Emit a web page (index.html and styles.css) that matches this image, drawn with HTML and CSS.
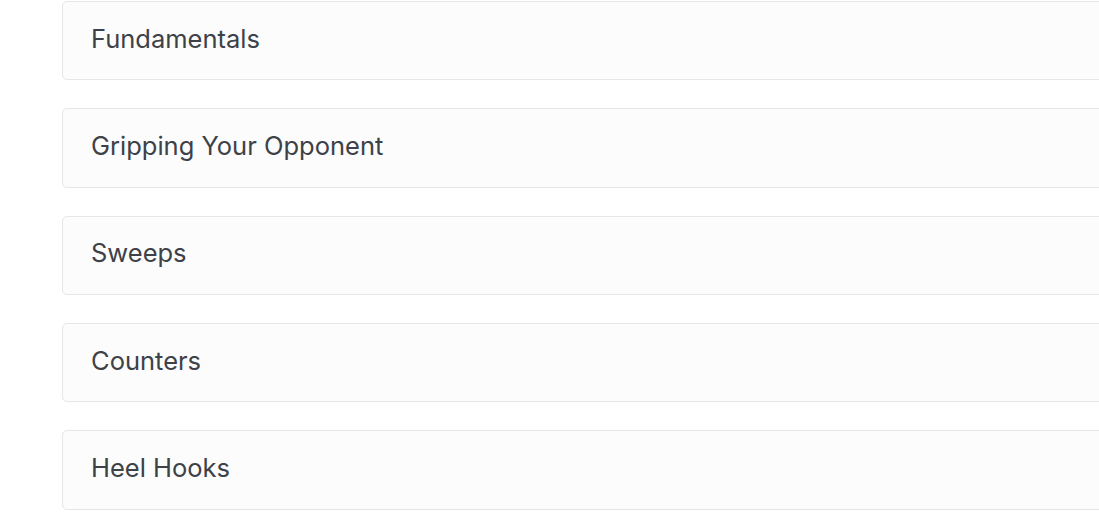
FILE: index.html
```html
<!DOCTYPE html>
<html lang="en">
<head>
<meta charset="utf-8">
<title>Modules</title>
<link rel="stylesheet" href="styles.css">
</head>
<body>
<main class="list">
  <div class="card"><span class="title">Fundamentals</span></div>
  <div class="card"><span class="title">Gripping Your Opponent</span></div>
  <div class="card"><span class="title">Sweeps</span></div>
  <div class="card"><span class="title">Counters</span></div>
  <div class="card"><span class="title">Heel Hooks</span></div>
</main>
</body>
</html>
```
FILE: styles.css
```css
html, body {
  margin: 0;
  padding: 0;
  background: #ffffff;
}
body {
  font-family: "Inter", "Liberation Sans", sans-serif;
  overflow: hidden;
}
.list {
  display: flex;
  flex-direction: column;
  gap: 28px;
  padding: 1px 0 0 62px;
  width: 1100px;
}
.card {
  box-sizing: border-box;
  height: 79.33px;
  display: flex;
  align-items: center;
  padding-left: 28px;
  padding-bottom: 5px;
  background: #fcfcfc;
  border: 1px solid #e6e6e6;
  border-radius: 5px;
}
.title {
  font-size: 25.5px;
  color: #3d4148;
}
```
